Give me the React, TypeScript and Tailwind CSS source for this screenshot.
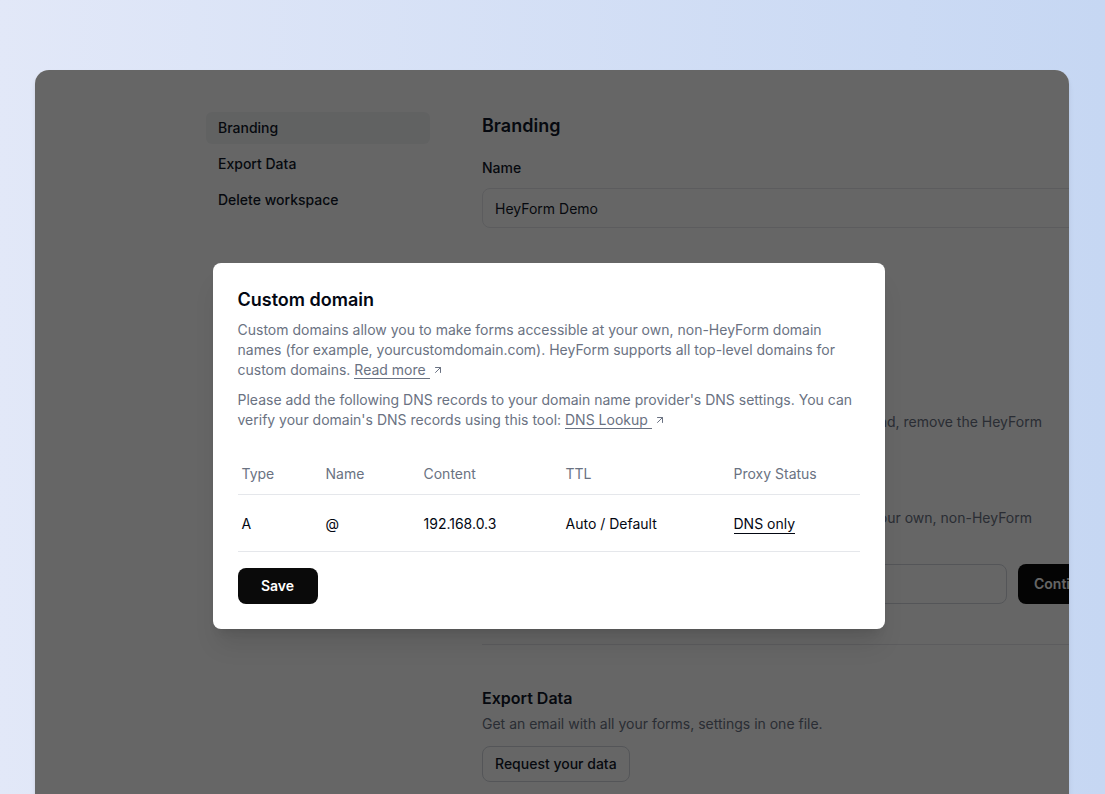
import { ArrowUpRight } from 'lucide-react';

const nav = ['Branding', 'Export Data', 'Delete workspace'];

const records = [{ type: 'A', name: '@', content: '192.168.0.3', ttl: 'Auto / Default', proxy: 'DNS only' }];

function Settings() {
  return (
    <div className="flex gap-[52px] pl-[171px] pt-[42px]">
      {/* боковое меню */}
      <nav className="w-[224px] shrink-0 flex flex-col gap-1">
        {nav.map((n, i) => (
          <div key={n} className={`h-8 flex items-center px-3 rounded-md text-sm font-medium text-gray-900 ${i === 0 ? 'bg-gray-100' : ''}`}>{n}</div>
        ))}
      </nav>

      <main className="w-[620px] shrink-0">
        <section className="pb-10 border-b border-gray-200">
          <h2 className="text-lg leading-7 font-semibold text-gray-900">Branding</h2>
          <label className="block mt-[18px] text-sm font-medium text-gray-900">Name</label>
          <input readOnly value="HeyForm Demo" className="mt-2.5 w-full h-10 px-3 rounded-lg border border-gray-200 bg-white text-sm text-gray-900 outline-none" />

          <label className="block mt-10 text-sm font-medium text-gray-900">Logo</label>
          <div className="mt-2.5 w-16 h-16 rounded-lg border border-dashed border-gray-300" />

          <label className="block mt-[26px] text-sm font-medium text-gray-900">Remove branding</label>
          <p className="mt-1 max-w-[576px] text-sm text-gray-500">Make your forms look more consistent with your agency brand, remove the HeyForm branding from all of your forms.</p>

          <label className="block mt-8 text-sm font-medium text-gray-900">Custom domain</label>
          <p className="mt-1 max-w-[560px] text-sm text-gray-500">Custom domains allow you to make all forms accessible at your own, non-HeyForm domain names.</p>
          <div className="mt-4 flex gap-[11px]">
            <input readOnly placeholder="forms.example.com" className="shrink-0 w-[525px] h-10 px-3 rounded-lg border border-gray-300 bg-white text-sm outline-none" />
            <button className="shrink-0 h-10 px-4 rounded-lg bg-[#0a0a0a] text-white text-sm font-semibold">Continue</button>
          </div>
        </section>

        <section className="pt-[41px]">
          <h3 className="text-base font-semibold text-gray-900">Export Data</h3>
          <p className="mt-1 text-sm text-gray-500">Get an email with all your forms, settings in one file.</p>
          <button className="mt-3 h-9 px-3 rounded-lg border border-gray-300 bg-white text-sm font-medium text-gray-900">Request your data</button>
        </section>
      </main>
    </div>
  );
}

function DomainModal() {
  return (
    <div className="w-[672px] rounded-lg bg-white px-[25px] pt-[25px] pb-[25px] shadow-xl">
      <h2 className="text-lg leading-6 font-semibold text-gray-950">Custom domain</h2>
      <p className="mt-2 text-sm leading-5 text-gray-500">
        Custom domains allow you to make forms accessible at your own, non-HeyForm domain names (for example, yourcustomdomain.com). HeyForm supports all top-level domains for custom domains.{' '}
        <a className="border-b border-gray-500 pr-1">Read more</a>
        <ArrowUpRight size={12} className="inline-block ml-0.5 -mt-0.5" />
      </p>
      <p className="mt-[10px] text-sm leading-5 text-gray-500">
        Please add the following DNS records to your domain name provider's DNS settings. You can verify your domain's DNS records using this tool:{' '}
        <a className="border-b border-gray-500 pr-1">DNS Lookup</a>
        <ArrowUpRight size={12} className="inline-block ml-0.5 -mt-0.5" />
      </p>

      <table className="mt-6 w-full text-sm text-left">
        <thead>
          <tr className="border-b border-gray-200">
            <th className="w-[84px] h-10 px-1 font-normal text-gray-500">Type</th>
            <th className="w-[98px] px-1 font-normal text-gray-500">Name</th>
            <th className="w-[142px] px-1 font-normal text-gray-500">Content</th>
            <th className="w-[168px] px-1 font-normal text-gray-500">TTL</th>
            <th className="px-1 font-normal text-gray-500">Proxy Status</th>
          </tr>
        </thead>
        <tbody>
          {records.map(r => (
            <tr key={r.type} className="border-b border-gray-200">
              <td className="h-[57px] pt-0.5 px-1 text-gray-950">{r.type}</td>
              <td className="pt-0.5 px-1 text-gray-950">{r.name}</td>
              <td className="pt-0.5 px-1 text-gray-950">{r.content}</td>
              <td className="pt-0.5 px-1 text-gray-950">{r.ttl}</td>
              <td className="pt-0.5 px-1 text-gray-950"><span className="border-b border-gray-950 pb-px">{r.proxy}</span></td>
            </tr>
          ))}
        </tbody>
      </table>

      <button className="mt-4 w-20 h-9 rounded-lg bg-[#0a0a0a] text-white text-sm font-semibold">Save</button>
    </div>
  );
}

export default function App() {
  return (
    <div className="h-screen overflow-hidden bg-linear-to-r from-[#e2e8f8] to-[#c6d7f3] pt-[70px] pl-[35px] pr-[36px] font-['Inter',sans-serif]">
      <div className="relative h-[752px] rounded-[14px] bg-white overflow-hidden shadow-md">
        <Settings />
        <div className="absolute inset-0 bg-black/60 flex items-center justify-center pr-[7px]">
          <DomainModal />
        </div>
      </div>
    </div>
  );
}
